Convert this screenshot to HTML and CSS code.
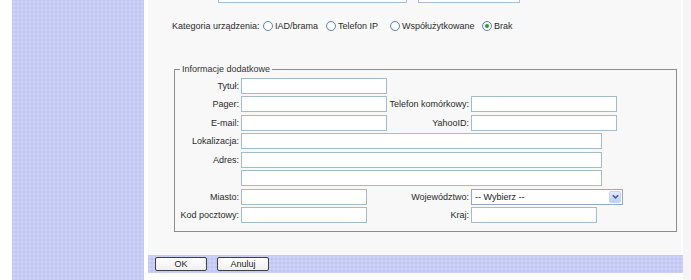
FILE: index.html
```html
<!DOCTYPE html>
<html lang="pl">
<head>
<meta charset="utf-8">
<title>Informacje dodatkowe</title>
<link rel="stylesheet" href="styles.css">
</head>
<body>
<div class="page">
  <div class="gutter"></div>
  <aside class="sidebar"></aside>
  <div class="sep"></div>
  <main class="main">
    <div class="content">
      <div class="top-fields">
        <span class="cut-box cut-a"></span>
        <span class="cut-box cut-b"></span>
      </div>
      <div class="category">
        <span class="cat-label">Kategoria urządzenia:</span>
        <span class="opt opt-1"><span class="radio"></span>IAD/brama</span>
        <span class="opt opt-2"><span class="radio"></span>Telefon IP</span>
        <span class="opt opt-3"><span class="radio"></span>Współużytkowane</span>
        <span class="opt opt-4"><span class="radio checked"></span>Brak</span>
      </div>
      <fieldset class="extra">
        <legend>Informacje dodatkowe</legend>
        <div class="grid">
          <span class="lbl">Tytuł:</span>
          <input class="inp w-mid" type="text">
          <span class="skip"></span>

          <span class="lbl">Pager:</span>
          <input class="inp w-mid" type="text">
          <span class="lbl">Telefon komórkowy:</span>
          <input class="inp w-mid" type="text">

          <span class="lbl">E-mail:</span>
          <input class="inp w-mid" type="text">
          <span class="lbl">YahooID:</span>
          <input class="inp w-mid" type="text">

          <span class="lbl">Lokalizacja:</span>
          <input class="inp w-long span3" type="text">

          <span class="lbl">Adres:</span>
          <input class="inp w-long span3" type="text">

          <span class="lbl"></span>
          <input class="inp w-long span3" type="text">

          <span class="lbl">Miasto:</span>
          <input class="inp w-short" type="text">
          <span class="lbl">Województwo:</span>
          <div class="select">
            <span class="select-text">-- Wybierz --</span>
            <span class="select-btn">
              <svg width="7" height="6" viewBox="0 0 7 6"><path d="M0.8 1.2 L3.5 3.9 L6.2 1.2" fill="none" stroke="#4d6185" stroke-width="1.6"/></svg>
            </span>
          </div>

          <span class="lbl">Kod pocztowy:</span>
          <input class="inp w-short" type="text">
          <span class="lbl">Kraj:</span>
          <input class="inp w-short" type="text">
        </div>
      </fieldset>
    </div>
    <div class="bar">
      <button class="btn btn-ok" type="button">OK</button>
      <button class="btn" type="button">Anuluj</button>
    </div>
    <div class="bottom"></div>
  </main>
  <div class="rest"></div>
</div>
</body>
</html>
```

FILE: styles.css
```css
html, body {
  margin: 0;
  padding: 0;
  background: #ffffff;
}

body {
  font-family: "Liberation Sans", Arial, sans-serif;
  font-size: 9px;
  color: #2a2a2a;
}

.page {
  display: flex;
  width: 691px;
  height: 280px;
  overflow: hidden;
}

.gutter {
  width: 12px;
  background: #ffffff;
}

.sidebar,
.bar {
  background-color: #c6ccf6;
  background-image:
    radial-gradient(circle at 50% 50%, rgba(255, 255, 255, 0.18) 0.8px, rgba(255, 255, 255, 0) 1.6px),
    radial-gradient(circle at 50% 50%, rgba(170, 178, 238, 0.22) 0.8px, rgba(170, 178, 238, 0) 1.6px);
  background-size: 4px 4px, 4px 4px;
  background-position: 0 0, 2px 2px;
}

.sidebar {
  width: 132px;
}

.sep {
  width: 4px;
  background: #ffffff;
}

.main {
  width: 535px;
  display: flex;
  flex-direction: column;
}

.rest {
  width: 8px;
  background: #f5f5f5;
}

.content {
  flex: 1;
  background: #f8f8f8;
  border-right: 2px solid #fdfdfd;
  display: flex;
  flex-direction: column;
}

/* inputs scrolled off the top */
.top-fields {
  display: flex;
  gap: 11px;
  padding-left: 70px;
}

.cut-box {
  display: block;
  height: 3px;
  box-sizing: border-box;
  border: 1px solid #a9bfd6;
  border-top: none;
  background: #ffffff;
}

.cut-a { width: 189px; }
.cut-b { width: 102px; }

/* category radios */
.category {
  display: flex;
  align-items: center;
  height: 12px;
  line-height: 12px;
  margin-top: 17px;
  padding-left: 24px;
  white-space: nowrap;
}

.cat-label {
  width: 91px;
}

.opt {
  display: flex;
  align-items: center;
}

.opt-1 { width: 63px; }
.opt-2 { width: 64px; }
.opt-3 { width: 92px; }

.radio {
  position: relative;
  width: 10px;
  height: 10px;
  box-sizing: border-box;
  border: 1px solid #6383aa;
  border-radius: 50%;
  background: radial-gradient(circle at 60% 60%, #ffffff 40%, #e4e8ee 100%);
  margin-right: 2px;
  flex: none;
}

.radio.checked::after {
  content: "";
  position: absolute;
  left: 2px;
  top: 2px;
  width: 4px;
  height: 4px;
  border-radius: 50%;
  background: #2c9c2c;
}

/* fieldset */
.extra {
  margin: 32px 4px 0 26px;
  padding: 3px 0 8px 5px;
  border: 1px solid #8c8c8c;
  min-width: 0;
}

.extra legend {
  margin-left: 0;
  padding: 0 2px;
  line-height: 11px;
  color: #333333;
}

.grid {
  display: grid;
  grid-template-columns: 61px 148px 82px 152px;
  grid-auto-rows: 16px;
  row-gap: 2.43px;
  align-items: center;
}

.lbl {
  text-align: right;
  padding-right: 2px;
  white-space: nowrap;
  line-height: 16px;
}

.skip {
  grid-column: 3 / 5;
}

.span3 {
  grid-column: 2 / 5;
}

.inp {
  display: block;
  height: 16px;
  box-sizing: border-box;
  margin: 0;
  padding: 0 2px;
  border: 1px solid #a3bccb;
  background: #ffffff;
  font: inherit;
  outline: none;
}

.w-mid { width: 146px; }
.w-long { width: 361px; }
.w-short { width: 126px; }

.select {
  display: flex;
  align-items: center;
  justify-content: space-between;
  width: 152px;
  height: 16px;
  box-sizing: border-box;
  border: 1px solid #94aac4;
  background: #ffffff;
  padding: 0 1px 0 3px;
}

.select-text {
  line-height: 14px;
  color: #222222;
}

.select-btn {
  display: flex;
  align-items: center;
  justify-content: center;
  width: 12px;
  height: 12px;
  border-radius: 2px;
  background: linear-gradient(#e3ebfd, #bccff8);
  border: 1px solid #c4d3f2;
  box-sizing: border-box;
}

/* bottom button bar */
.bar {
  height: 18px;
  display: flex;
  gap: 10px;
  padding: 2px 0 0 7px;
  box-sizing: border-box;
}

.btn {
  width: 52px;
  height: 14px;
  margin: 0;
  padding: 0;
  border: 1px solid #3f3f3f;
  border-radius: 2px;
  background: linear-gradient(#ffffff, #f0f0f0);
  font: inherit;
  color: #222222;
  line-height: 12px;
}

.bottom {
  height: 7px;
  background: #ffffff;
}
```
